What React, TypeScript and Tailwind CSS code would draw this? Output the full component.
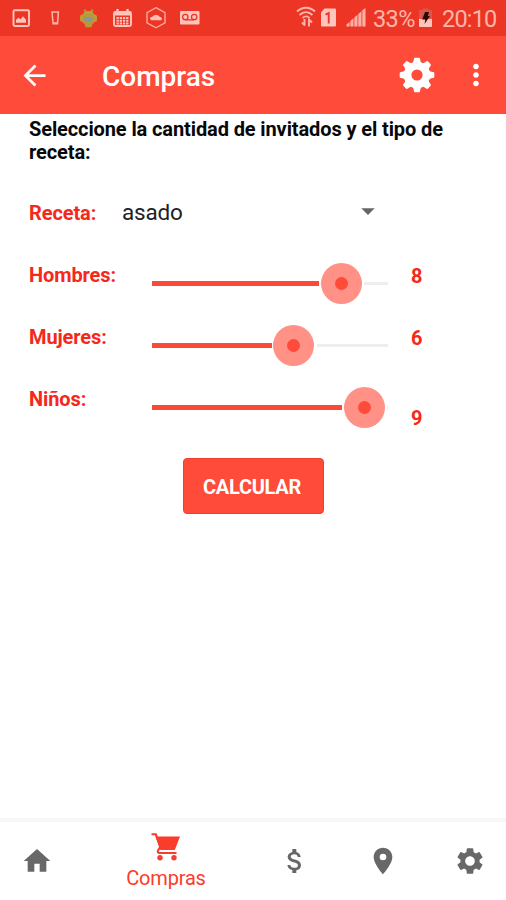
import { useState } from 'react';
import {
  MdArrowBack,
  MdArrowDropDown,
  MdAttachMoney,
  MdHome,
  MdMoreVert,
  MdPlace,
  MdSettings,
} from 'react-icons/md';

const TRACK_WIDTH = 236;

const Cart = ({ size }: { size: number }) => (
  <svg width={size} height={size} viewBox="0 0 32 32" fill="none">
    <path d="M1.500 3.300h4.300l4.500 12.500-2.300 3.700c-.6 1.400.1 2.500 1.400 2.500h17.100" stroke="currentColor" strokeWidth="2.100" />
    <path d="M5.500 5.500h24.500l-5.200 13.500H10.300z" fill="currentColor" />
    <circle cx="10" cy="26.800" r="2.700" fill="currentColor" />
    <circle cx="24" cy="26.800" r="2.700" fill="currentColor" />
  </svg>
);

const guests = [
  { label: 'Hombres:', value: 8, offset: 'pt-[20px]' },
  { label: 'Mujeres:', value: 6, offset: 'pt-[20px]' },
  { label: 'Niños:', value: 9, offset: 'pt-[38px]' },
];

const tabs = [
  { name: 'Inicio', icon: MdHome, width: 'w-[74px]' },
  { name: 'Compras', icon: Cart, width: 'w-[184px]' },
  { name: 'Gastos', icon: MdAttachMoney, width: 'w-[74px]' },
  { name: 'Mapa', icon: MdPlace, width: 'w-[102px]' },
  { name: 'Ajustes', icon: MdSettings, width: 'w-[72px]' },
];

const Notifications = () => (
  <svg className="absolute left-0 top-0" width="210" height="36" viewBox="0 0 210 36" fill="none">
    {/* gallery */}
    <rect x="13.500" y="10.200" width="15.500" height="15.800" rx="1.200" stroke="#ffc4bb" strokeWidth="1.900" />
    <path d="M16 22.800v-3l2.500-2 2 1.500 2.500-3 3 3.500v3z" fill="#ffc4bb" />
    {/* glass */}
    <path d="M52 12h6.400l-.9 11.700h-4.400z" stroke="#ffb5aa" strokeWidth="1.500" />
    <path d="M53.600 23h3.400" stroke="#ffb5aa" strokeWidth="1.600" />
    {/* android */}
    <path d="M84.500 9.500l1.500 3.500M92.500 9.500l-1.500 3.500" stroke="#a99a3a" strokeWidth="2" />
    <path d="M83 15c0-5.500 11-5.500 11 0z" fill="#b5a33a" />
    <rect x="80" y="14.500" width="17" height="7.500" rx="2.500" fill="#c09a35" />
    <path d="M83 14h11v9.500h-1.500l-1 3.700h-6l-1-3.700H83z" fill="#b59a38" />
    <rect x="84.500" y="17" width="8" height="4.500" rx="1" fill="#8a93a8" />
    {/* calendar */}
    <path d="M117.500 9v3M127.500 9v3" stroke="#ffc4bb" strokeWidth="2.400" />
    <rect x="114" y="12" width="17" height="14" rx="1.500" stroke="#ffc4bb" strokeWidth="1.900" />
    <path d="M114 13.500h17" stroke="#ffc4bb" strokeWidth="4" />
    <path d="M116.500 18h12M116.500 20.800h12M116.500 23.500h12" stroke="#ffc4bb" strokeWidth="2" strokeDasharray="2.300 .9" />
    {/* hexagon */}
    <path d="M156 7.700l9 4.900v10.300l-9 4.900-9-4.900V12.600z" stroke="#ffaa9d" strokeWidth="1.400" />
    <path d="M150 19c0-1.700 1-2 2.300-2.300 1.700-2.300 6.200-2 7.200 0 1.500.2 2.500.8 2.500 2.500l-1 1h-9.500z" fill="#ffbdb3" />
    {/* voicemail */}
    <rect x="180" y="11" width="19.500" height="13.500" rx="1" fill="#ffc4bb" />
    <circle cx="185.300" cy="17" r="2.700" stroke="#ec3524" strokeWidth="1.300" />
    <circle cx="194.200" cy="17" r="2.700" stroke="#ec3524" strokeWidth="1.300" />
    <path d="M185.300 19.900h8.900" stroke="#ec3524" strokeWidth="1.300" />
  </svg>
);

const Signals = () => (
  <svg className="absolute left-[296px] top-0" width="74" height="36" viewBox="296 0 74 36" fill="none">
    <path d="M297 11.500c5.300-5 12.700-5 18 0M299.500 15c4-3.700 9-3.700 13 0M302.500 18c2.200-2 5-2 7 0" stroke="#ffb5aa" strokeWidth="1.800" />
    <path d="M304.500 19v6.500M305 25.500l-3-3M309 26.500v-8M308.500 19l3.500 3.500" stroke="#ffb5aa" strokeWidth="1.900" />
    <path d="M321 12.500l3.500-4h10.500a1 1 0 0 1 1 1V25.500a1 1 0 0 1-1 1h-13a1 1 0 0 1-1-1z" fill="#ffc4bb" />
    <path d="M325.500 14.700l3.200-1.700v10.500" stroke="#e83a2a" strokeWidth="1.900" />
    <path d="M346.500 26.500v-2l3-2.600v4.600zM350.300 26.500v-5.500l3.200-2.700v8.200zM354.300 26.500v-9l3.200-2.700v11.700zM358.300 26.500v-12.600l3.200-2.700v15.300zM362.300 26.500V10.300l3.200-2.300v18.500z" fill="#ffb0a4" />
  </svg>
);

const Battery = () => (
  <svg width="16" height="22" viewBox="0 0 16 22">
    <path d="M4.500 3V1.500h6V3H13a1 1 0 0 1 1 1v9H1V4a1 1 0 0 1 1-1z" fill="#d9584b" />
    <path d="M1 12h13v7a1 1 0 0 1-1 1H2a1 1 0 0 1-1-1z" fill="#ffc4bb" />
    <path d="M7 5h4L9.800 9H12l-5.500 8L7.300 12.500H4.200z" fill="#2b0805" />
  </svg>
);

const StatusBar = () => (
  <div className="relative flex h-9 items-center bg-[#ec3524] text-[#ffb5aa]">
    <Notifications />
    <Signals />
    <span className="ml-[373px] w-[45px] pt-px text-[23.5px] leading-9 tracking-[-0.6px]">33%</span>
    <span className="flex w-[24px]"><Battery /></span>
    <span className="pt-px text-[23.5px] leading-9 tracking-[-0.8px]">20:10</span>
  </div>
);

const teeth = [0, 45, 90, 135, 180, 225, 270, 315];

const Gear = () => (
  <svg width="36" height="36" viewBox="-18 -18 36 36">
    <circle r="9.400" fill="none" stroke="#fff" strokeWidth="7.600" />
    {teeth.map((angle) => (
      <path key={angle} d="M-4.600-12Q-3.300-13-3.100-16Q-3-17.300-2-17.300H2Q3-17.300 3.100-16Q3.300-13 4.600-12z" fill="#fff" transform={`rotate(${angle})`} />
    ))}
  </svg>
);

const AppBar = () => (
  <header className="flex h-[78px] items-center bg-[#ff4b39] text-white">
    <button className="ml-[18px] w-[84px]" aria-label="Volver"><MdArrowBack size={33} /></button>
    <h1 className="grow pt-[3px] text-[28px] font-medium leading-8">Compras</h1>
    <button className="w-[60px]" aria-label="Opciones"><Gear /></button>
    <button className="mr-[13px]" aria-label="Más"><MdMoreVert size={34} /></button>
  </header>
);

const Slider = ({ value }: { value: number }) => {
  const center = (value / 10) * TRACK_WIDTH;
  return (
    <div className="relative mt-[19px] flex h-[41px] w-[236px] shrink-0 items-center">
      <div className="h-[5px] bg-[#fb4a39]" style={{ width: center - 22 }} />
      <div className="w-[45px]" />
      <div className="h-[3px] grow bg-[#eeeeee]" />
      <div
        className="absolute top-0 flex size-[41px] items-center justify-center rounded-full bg-[#ff9186]"
        style={{ left: center - 20.2 }}
      >
        <span className="size-[13px] rounded-full bg-[#ff4b3a]" />
      </div>
    </div>
  );
};

export default function App() {
  const [active, setActive] = useState('Compras');

  return (
    <div className="flex h-[900px] w-[506px] flex-col overflow-hidden bg-white font-['Roboto',sans-serif]">
      <StatusBar />
      <AppBar />
      <main className="flex grow flex-col pl-[29px] text-[20px] text-[#f5281b]">
        <p className="mt-[4px] w-[430px] font-bold leading-[23px] tracking-[-0.11px] text-[#080808]">
          Seleccione la cantidad de invitados y el tipo de receta:
        </p>
        <div className="mt-[33px] flex h-[32px] items-center">
          <span className="w-[93px] font-bold tracking-[-0.11px]">Receta:</span>
          <span className="w-[230px] text-[22.5px] tracking-[-0.2px] text-[#222]">asado</span>
          <MdArrowDropDown size={32} className="mb-[4px] text-[#666]" />
        </div>
        <div className="mt-[15px]">
          {guests.map((guest) => (
            <div key={guest.label} className="flex h-[62px] items-start font-bold leading-6">
              <span className="w-[123px] pt-[19px] tracking-[-0.11px]">{guest.label}</span>
              <Slider value={guest.value} />
              <span className={`ml-[23px] ${guest.offset}`}>{guest.value}</span>
            </div>
          ))}
        </div>
        <button className="ml-[154px] mt-[28px] h-[56px] w-[141px] rounded-[4px] border border-[#f33c2a] bg-[#ff4b39] pr-[3px] pt-px text-[20px] font-bold tracking-[-0.3px] text-white">
          CALCULAR
        </button>
      </main>
      <nav className="flex h-[82px] border-t-4 border-[#f7f7f7]">
        {tabs.map(({ name, icon: Icon, width }) => (
          <button
            key={name}
            onClick={() => setActive(name)}
            className={`flex shrink-0 flex-col items-center ${width} ${active === name ? 'pt-[9px] text-[#fa3c2c]' : 'pt-[23px] text-[#686868]'}`}
          >
            <Icon size={32} />
            {active === name && <span className="pt-px text-[20px] leading-7 tracking-[-0.2px]">{name}</span>}
          </button>
        ))}
      </nav>
    </div>
  );
}
